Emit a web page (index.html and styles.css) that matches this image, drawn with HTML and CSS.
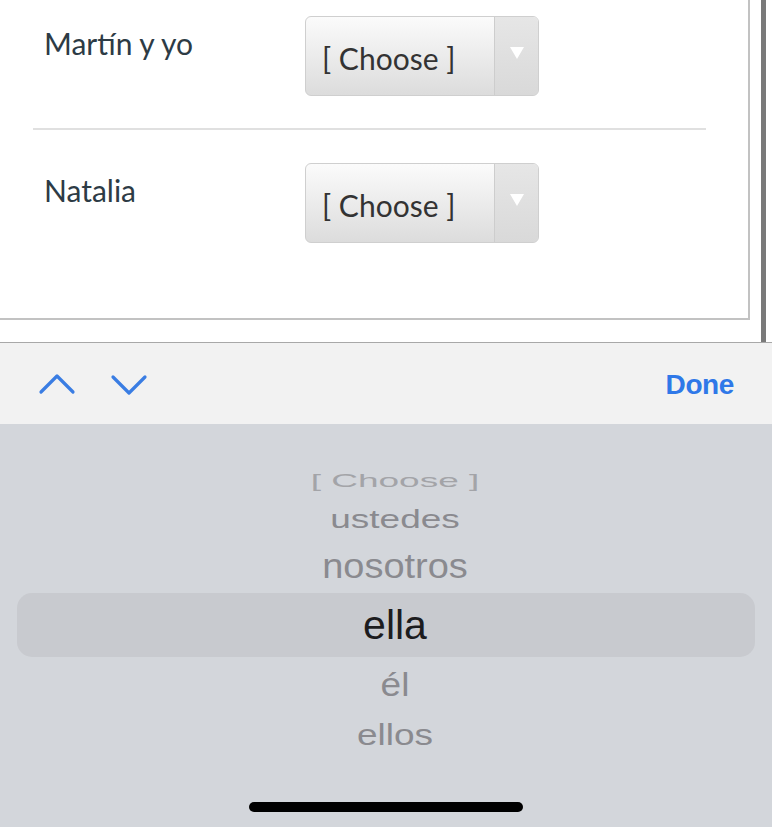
FILE: index.html
```html
<!DOCTYPE html>
<html>
	<head>
	<meta charset="utf-8"/>
		<link rel="stylesheet" href="styles.css">
	</head>
	<body>
		<div class="screen">
			<div class="page">
				<div class="card">
					<div class="row">
						<div class="label">Martín y yo</div>
						<div class="select">
							<span class="select-text">[ Choose ]</span>
							<span class="select-btn"><span class="tri"></span></span>
						</div>
					</div>
					<div class="divider"></div>
					<div class="row row2">
						<div class="label">Natalia</div>
						<div class="select">
							<span class="select-text">[ Choose ]</span>
							<span class="select-btn"><span class="tri"></span></span>
						</div>
					</div>
				</div>
				<div class="scrollbar"></div>
			</div>

			<div class="toolbar">
				<div class="arrows">
					<svg class="chev" width="40" height="24" viewBox="0 0 40 24">
						<polyline points="4,19 20,3 36,19" fill="none" stroke="#3a7de3" stroke-width="3.2" stroke-linecap="round" stroke-linejoin="round"/>
					</svg>
					<svg class="chev" width="40" height="24" viewBox="0 0 40 24">
						<polyline points="4,4 20,20 36,4" fill="none" stroke="#3a7de3" stroke-width="3.2" stroke-linecap="round" stroke-linejoin="round"/>
					</svg>
				</div>
				<div class="done">Done</div>
			</div>

			<div class="picker">
				<div class="item i-choose"><span>[ Choose ]</span></div>
				<div class="item i-ustedes"><span>ustedes</span></div>
				<div class="item i-nosotros"><span>nosotros</span></div>
				<div class="item i-ella"><span>ella</span></div>
				<div class="item i-el"><span>él</span></div>
				<div class="item i-ellos"><span>ellos</span></div>
				<div class="home"></div>
			</div>
		</div>
	</body>
</html>
```

FILE: styles.css
```css
html, body{
	margin: 0;
	padding: 0;
}
body{
	width: 772px;
	height: 827px;
	overflow: hidden;
	background: #fff;
}
.screen{
	display: flex;
	flex-direction: column;
	height: 827px;
}

/* page behind the keyboard */
.page{
	height: 342px;
	display: flex;
	background: #fff;
}
.card{
	width: 752px;
	height: 320px;
	margin-left: -2px;
	box-sizing: border-box;
	border-right: 2px solid #c2c2c2;
	border-bottom: 2px solid #c2c2c2;
}
.row{
	display: flex;
	height: 128px;
	box-sizing: border-box;
	padding-top: 16px;
	padding-left: 46px;
}
.row2{
	padding-top: 33px;
	height: 190px;
}
.label{
	width: 261px;
	margin-top: 9px;
	font-family: Lato, "Liberation Sans", sans-serif;
	font-size: 30px;
	line-height: 36px;
	color: #2d3b45;
}
.select{
	display: flex;
	width: 234px;
	height: 80px;
	box-sizing: border-box;
	border: 1px solid #cfcfcf;
	border-radius: 6px;
	background: linear-gradient(#fbfbfb, #dcdcdc);
	overflow: hidden;
}
.select-text{
	flex: 1;
	padding-left: 16px;
	padding-top: 3px;
	font-family: Lato, "Liberation Sans", sans-serif;
	font-size: 30px;
	line-height: 76px;
	color: #333;
}
.select-btn{
	width: 44px;
	border-left: 1px solid #cdcdcd;
	background: linear-gradient(#e6e6e6, #d9d9d9);
	display: flex;
	justify-content: center;
	padding-top: 30px;
	box-sizing: border-box;
}
.tri{
	width: 0;
	height: 0;
	border-left: 7px solid transparent;
	border-right: 7px solid transparent;
	border-top: 12px solid #fff;
}
.divider{
	height: 2px;
	margin-left: 35px;
	width: 673px;
	background: #e0e0e0;
}
.scrollbar{
	width: 5px;
	margin-left: 11px;
	height: 342px;
	background: #7a7a7a;
}

/* keyboard accessory bar */
.toolbar{
	height: 82px;
	box-sizing: border-box;
	border-top: 1px solid #a8a8a8;
	background: #f2f2f2;
	display: flex;
	align-items: center;
	justify-content: space-between;
	padding: 0 38px 0 37px;
}
.arrows{
	display: flex;
	gap: 32px;
	padding-top: 2px;
}
.done{
	font-family: "Liberation Sans", Arial, sans-serif;
	font-weight: bold;
	font-size: 28px;
	letter-spacing: -0.4px;
	color: #2f78e8;
	padding-top: 2px;
}

/* wheel picker */
.picker{
	flex: 1;
	background: #d3d6db;
	display: flex;
	flex-direction: column;
	padding-top: 39px;
	font-family: "Liberation Sans", Arial, sans-serif;
}
.item{
	display: flex;
	justify-content: center;
	align-items: center;
	color: #8a8a8f;
	font-size: 37px;
}
.item span{
	display: block;
	padding-left: 18px;
}
.i-choose{
	height: 36px;
	color: #a3a4a8;
}
.i-choose span{
	transform: scaleY(0.5);
}
.i-ustedes{
	height: 40px;
}
.i-ustedes span{
	transform: scaleY(0.72);
}
.i-nosotros{
	height: 54px;
	font-size: 38px;
}
.i-nosotros span{
	transform: scaleY(0.9);
}
.i-ella{
	height: 64px;
	margin: 0 17px;
	border-radius: 15px;
	background: #c8cacf;
	color: #1c1c1e;
	font-size: 41px;
}
.i-ella span{
	padding-left: 0;
	transform: translateX(9px);
}
.i-el{
	height: 56px;
}
.i-el span{
	transform: scaleY(0.92);
}
.i-ellos{
	height: 46px;
}
.i-ellos span{
	transform: scaleY(0.78);
}
.home{
	margin-top: auto;
	margin-bottom: 15px;
	align-self: center;
	width: 274px;
	height: 10px;
	border-radius: 5px;
	background: #000;
}
```
